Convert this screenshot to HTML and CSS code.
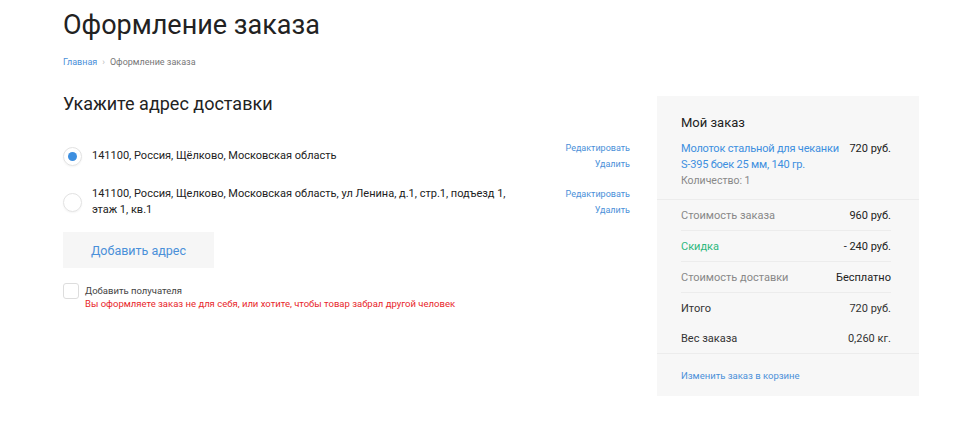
FILE: index.html
```html
<!DOCTYPE html>
<html lang="ru">
<head>
    <meta charset="UTF-8">
    <title>Оформление заказа</title>
    <link rel="stylesheet" href="styles.css">
</head>
<body>
    <div class="page">
        <h1 class="page-title">Оформление заказа</h1>
        <div class="breadcrumbs">
            <a href="#">Главная</a>
            <span class="crumb-sep">›</span>
            <span>Оформление заказа</span>
        </div>

        <div class="checkout">
            <div class="delivery">
                <h2>Укажите адрес доставки</h2>

                <div class="address-list">
                    <div class="address">
                        <span class="radio checked"></span>
                        <div class="address-text">141100, Россия, Щёлково, Московская область</div>
                        <div class="address-actions">
                            <a href="#">Редактировать</a>
                            <a href="#">Удалить</a>
                        </div>
                    </div>
                    <div class="address">
                        <span class="radio"></span>
                        <div class="address-text">141100, Россия, Щелково, Московская область, ул Ленина, д.1, стр.1, подъезд 1, этаж 1, кв.1</div>
                        <div class="address-actions">
                            <a href="#">Редактировать</a>
                            <a href="#">Удалить</a>
                        </div>
                    </div>
                </div>

                <button class="add-address">Добавить адрес</button>

                <div class="recipient">
                    <span class="checkbox"></span>
                    <div>
                        <div class="recipient-label">Добавить получателя</div>
                        <div class="recipient-note">Вы оформляете заказ не для себя, или хотите, чтобы товар забрал другой человек</div>
                    </div>
                </div>
            </div>

            <div class="order">
                <div class="order-title">Мой заказ</div>
                <div class="order-item">
                    <div class="item-info">
                        <a href="#" class="item-name">Молоток стальной для чеканки S-395 боек 25 мм, 140 гр.</a>
                        <div class="item-qty">Количество: 1</div>
                    </div>
                    <div class="item-price">720 руб.</div>
                </div>
                <div class="order-rows">
                    <div class="order-row muted"><span>Стоимость заказа</span><span class="val">960 руб.</span></div>
                    <div class="order-row discount"><span>Скидка</span><span class="val">- 240 руб.</span></div>
                    <div class="order-row muted"><span>Стоимость доставки</span><span class="val">Бесплатно</span></div>
                    <div class="order-row plain"><span>Итого</span><span class="val">720 руб.</span></div>
                    <div class="order-row plain"><span>Вес заказа</span><span class="val">0,260 кг.</span></div>
                </div>
                <div class="order-footer">
                    <a href="#">Изменить заказ в корзине</a>
                </div>
            </div>
        </div>
    </div>
</body>
</html>
```

FILE: styles.css
```css
body {
    margin: 0;
    font-family: Roboto, "Noto Sans", sans-serif;
    color: #222;
    background: #fff;
}

a {
    color: #4a90d9;
    text-decoration: none;
}

.page {
    padding: 0 41px 0 63px;
}

.page-title {
    margin: 0;
    padding-top: 9px;
    font-size: 27px;
    font-weight: 400;
    line-height: 32px;
}

.breadcrumbs {
    margin-top: 15px;
    font-size: 9px;
    color: #777;
    line-height: 12px;
    display: flex;
    gap: 5px;
}

.crumb-sep {
    color: #bbb;
}

.checkout {
    display: flex;
    gap: 27px;
    margin-top: 22px;
}

.delivery {
    flex: 1;
}

.delivery h2 {
    margin: 0;
    padding-top: 3px;
    font-size: 18px;
    font-weight: 400;
    line-height: 22px;
}

.address-list {
    margin-top: 23px;
}

.address {
    display: flex;
    align-items: center;
    min-height: 36px;
    margin-bottom: 10px;
}

.radio {
    width: 17px;
    height: 17px;
    border: 1px solid #e2e2e2;
    border-radius: 50%;
    position: relative;
    flex-shrink: 0;
    box-shadow: 0 1px 2px rgba(0, 0, 0, 0.05);
}

.radio.checked::after {
    content: "";
    position: absolute;
    left: 4px;
    top: 4px;
    width: 9px;
    height: 9px;
    border-radius: 50%;
    background: #3d8fe0;
}

.address-text {
    flex: 1;
    margin-left: 10px;
    font-size: 11px;
    line-height: 16px;
    max-width: 425px;
}

.address-actions {
    margin-left: auto;
    display: flex;
    flex-direction: column;
    align-items: flex-end;
    font-size: 9px;
    line-height: 16px;
}

.add-address {
    margin-top: 2px;
    width: 151px;
    height: 36px;
    background: #f6f6f6;
    border: none;
    color: #4a90d9;
    font-family: inherit;
    font-size: 12.5px;
    cursor: pointer;
}

.recipient {
    display: flex;
    gap: 6px;
    margin-top: 15px;
}

.checkbox {
    width: 14px;
    height: 14px;
    border: 1px solid #ddd;
    border-radius: 3px;
    flex-shrink: 0;
}

.recipient-label {
    font-size: 9.5px;
    color: #444;
    line-height: 13px;
    margin-top: 1px;
}

.recipient-note {
    font-size: 9.5px;
    color: #e8262b;
    line-height: 13px;
}

.order {
    width: 262px;
    background: #f7f7f7;
    margin-top: 6px;
    align-self: flex-start;
}

.order-title {
    padding: 19px 28px 0 24px;
    font-size: 13px;
    line-height: 16px;
}

.order-item {
    display: flex;
    justify-content: space-between;
    gap: 8px;
    padding: 10px 28px 11px 24px;
    border-bottom: 1px solid #ececec;
}

.item-info {
    flex: 1;
}

.item-name {
    display: block;
    font-size: 11px;
    letter-spacing: -0.2px;
    line-height: 16px;
    color: #3d8fe0;
}

.item-qty {
    font-size: 10.5px;
    color: #888;
    line-height: 15px;
}

.item-price {
    font-size: 11px;
    line-height: 16px;
    white-space: nowrap;
}

.order-rows {
    padding: 0 28px 0 24px;
    border-bottom: 1px solid #ececec;
}

.order-row {
    display: flex;
    justify-content: space-between;
    height: 30px;
    align-items: center;
    font-size: 11px;
    border-bottom: 1px solid #ececec;
}

.order-row:nth-child(n+3) {
    border-bottom: none;
}

.order-row:nth-child(3) {
    border-bottom: 1px solid #ececec;
}

.order-row.muted span:first-child {
    color: #888;
}

.order-row.discount span:first-child {
    color: #2db87d;
}

.order-row .val {
    color: #222;
}

.order-row.plain span {
    color: #333;
}

.order-footer {
    padding: 15px 24px 13px;
    font-size: 9.5px;
    line-height: 14px;
}
```
